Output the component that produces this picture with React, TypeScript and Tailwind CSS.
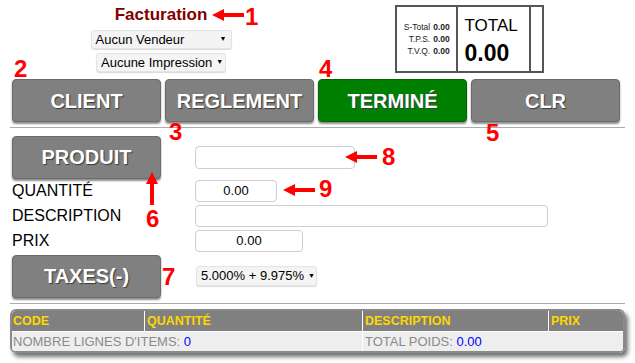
import React from 'react';

const btn =
  'h-[43px] w-[149px] rounded-[4px] border border-[#6b6b6b] shadow-[0_2px_2px_rgba(0,0,0,0.45)] text-white font-bold text-[20px] [text-shadow:1px_1px_1px_#3a3a3a] flex items-center justify-center';

const input = 'h-[22px] rounded-[4px] border border-[#cfcfcf] bg-white text-[13px] text-center';

const Num = ({ n, className }: { n: string; className: string }) => (
  <span className={`absolute text-[24px] font-bold leading-none text-[#ff0000] ${className}`}>{n}</span>
);

const LeftArrow = ({ className }: { className: string }) => (
  <svg className={`absolute ${className}`} width="32" height="12" viewBox="0 0 32 12">
    <polygon points="0,6 12,0 12,12" fill="#ff0000" />
    <rect x="11" y="4" width="21" height="4" fill="#ff0000" />
  </svg>
);

const Select = ({ label, className }: { label: string; className: string }) => (
  <div
    className={`flex items-center justify-between whitespace-nowrap h-[19px] pl-[4px] pr-[4px] rounded-[3px] bg-[#f4f4f4] border border-[#e4e4e4] shadow-[0_1px_1px_rgba(0,0,0,0.15)] text-[13px] text-black ${className}`}
  >
    <span>{label}</span>
    <span className="text-[7px] ml-[4px]">▼</span>
  </div>
);

export default function App() {
  return (
    <div className="relative w-[635px] h-[363px] bg-white overflow-hidden font-['Liberation_Sans',Arial,sans-serif] px-[12px]">
      {/* Top area */}
      <div className="flex h-[79px]">
        <div className="w-[298px] flex flex-col items-center">
          <div className="mt-[5px] h-[20px] leading-[20px] text-[17px] font-bold text-[#800000]">Facturation</div>
          <Select label="Aucun Vendeur" className="mt-[5px] w-[141px]" />
          <Select label="Aucune Impression" className="mt-[4px] w-[130px]" />
        </div>
        <div className="flex-1 flex justify-center pl-[5px]">
          <div className="mt-[5px] h-[68px] w-[149px] border-2 border-[#555] flex">
            <div className="w-[61px] border-r-2 border-[#555] flex flex-col justify-center items-center text-[8.5px] leading-[12px] text-[#222]">
              <div className="flex gap-[3px]">
                <span className="w-[28px] text-right">S-Total</span>
                <span className="font-bold">0.00</span>
              </div>
              <div className="flex gap-[3px]">
                <span className="w-[28px] text-right">T.P.S.</span>
                <span className="font-bold">0.00</span>
              </div>
              <div className="flex gap-[3px]">
                <span className="w-[28px] text-right">T.V.Q.</span>
                <span className="font-bold">0.00</span>
              </div>
            </div>
            <div className="w-[73px] border-r-2 border-[#555] pl-[7px] flex flex-col">
              <div className="mt-[9px] text-[17px] leading-[20px] text-black">TOTAL</div>
              <div className="mt-[5px] text-[23px] leading-[24px] font-bold text-black">0.00</div>
            </div>
            <div className="flex-1" />
          </div>
        </div>
      </div>

      {/* Main buttons */}
      <div className="flex gap-[4px]">
        <div className={`${btn} bg-[#808080]`}>CLIENT</div>
        <div className={`${btn} bg-[#808080]`}>REGLEMENT</div>
        <div className={`${btn} bg-[#008000] border-[#006400]`}>TERMINÉ</div>
        <div className={`${btn} bg-[#808080]`}>CLR</div>
      </div>

      <div className="-mx-[2px] mt-[5px] border-t border-[#aaaaaa]" />

      {/* Product form */}
      <div className="mt-[8px] flex flex-col gap-[3px]">
        <div className="flex items-center h-[42px]">
          <div className="w-[183px]">
            <div className={`${btn} h-[42px] bg-[#808080]`}>PRODUIT</div>
          </div>
          <div className={`${input} w-[160px] h-[23px]`} />
        </div>
        <div className="flex items-center h-[22px] -mt-[1px]">
          <div className="w-[183px] text-[16px] text-black">QUANTITÉ</div>
          <div className={`${input} w-[82px] leading-[20px]`}>0.00</div>
        </div>
        <div className="flex items-center h-[22px]">
          <div className="w-[183px] text-[16px] text-black">DESCRIPTION</div>
          <div className={`${input} w-[353px]`} />
        </div>
        <div className="flex items-center h-[22px]">
          <div className="w-[183px] text-[16px] text-black">PRIX</div>
          <div className={`${input} w-[108px] leading-[20px]`}>0.00</div>
        </div>
        <div className="flex items-center h-[42px]">
          <div className="w-[184px]">
            <div className={`${btn} h-[42px] bg-[#808080]`}>TAXES(-)</div>
          </div>
          <Select label="5.000% + 9.975%" className="w-[121px] h-[20px]" />
        </div>
      </div>

      <div className="-mx-[2px] mt-[6px] border-t border-[#aaaaaa]" />

      {/* Items table */}
      <div className="-mx-[2px] mt-[5px] rounded-[6px] border-2 border-[#8a8a8a] overflow-hidden shadow-[3px_4px_4px_rgba(0,0,0,0.55)]">
        <div className="grid grid-cols-[132px_217px_185px_1fr] gap-x-[1px] bg-white">
          <div className="h-[20px] bg-[#808080] pl-[1px] text-[12.5px] font-bold leading-[20px] text-[#ffd700]">CODE</div>
          <div className="h-[20px] bg-[#808080] pl-[2px] text-[12.5px] font-bold leading-[20px] text-[#ffd700]">QUANTITÉ</div>
          <div className="h-[20px] bg-[#808080] pl-[2px] text-[12.5px] font-bold leading-[20px] text-[#ffd700]">DESCRIPTION</div>
          <div className="h-[20px] bg-[#808080] pl-[2px] text-[12.5px] font-bold leading-[20px] text-[#ffd700]">PRIX</div>
        </div>
        <div className="grid grid-cols-[350px_1fr] gap-x-[1px] bg-white border-t border-white">
          <div className="h-[19px] bg-[#eeeeee] pl-[1px] text-[13px] leading-[19px] text-[#8a8a8a]">
            NOMBRE LIGNES D'ITEMS: <span className="text-[#0000ff]">0</span>
          </div>
          <div className="h-[19px] bg-[#eeeeee] pl-[2px] text-[13px] leading-[19px] text-[#8a8a8a]">
            TOTAL POIDS: <span className="text-[#0000ff]">0.00</span>
          </div>
        </div>
      </div>

      {/* Annotations */}
      <LeftArrow className="left-[212px] top-[9px]" />
      <Num n="1" className="left-[245px] top-[5px]" />
      <Num n="2" className="left-[14px] top-[57px]" />
      <Num n="3" className="left-[169px] top-[120px]" />
      <Num n="4" className="left-[319px] top-[57px]" />
      <Num n="5" className="left-[486px] top-[121px]" />
      <svg className="absolute left-[146px] top-[172px]" width="12" height="33" viewBox="0 0 12 33">
        <polygon points="6,0 0,12 12,12" fill="#ff0000" />
        <rect x="4" y="11" width="4" height="22" fill="#ff0000" />
      </svg>
      <Num n="6" className="left-[146px] top-[207px]" />
      <Num n="7" className="left-[162px] top-[265px]" />
      <LeftArrow className="left-[345px] top-[151px]" />
      <Num n="8" className="left-[382px] top-[145px]" />
      <LeftArrow className="left-[283px] top-[184px]" />
      <Num n="9" className="left-[319px] top-[177px]" />
    </div>
  );
}
